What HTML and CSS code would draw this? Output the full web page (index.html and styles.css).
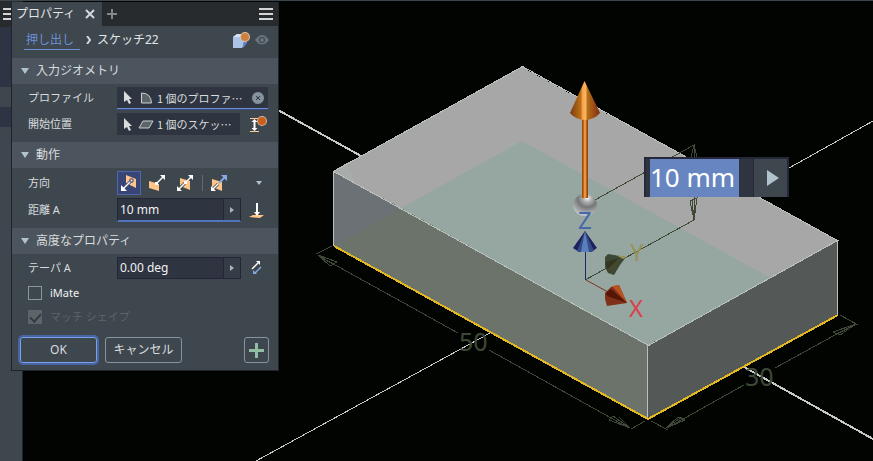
FILE: index.html
```html
<!DOCTYPE html>
<html lang="ja">
<head>
<meta charset="utf-8">
<title>プロパティ</title>
<meta name="viewport" content="width=device-width, initial-scale=1">
<link rel="stylesheet" href="styles.css">
</head>
<body>
<div class="app">
  <main class="scene">
    <svg class="model" width="873" height="461" viewBox="0 0 873 461" aria-label="モデル">
      <defs>
        <linearGradient id="shaft"><stop offset="0" stop-color="#8b3d0e"/><stop offset=".25" stop-color="#c4680f"/><stop offset=".5" stop-color="#ffad57"/><stop offset=".72" stop-color="#bd6a15"/><stop offset="1" stop-color="#84320b"/></linearGradient>
        <linearGradient id="head"><stop offset="0" stop-color="#823614"/><stop offset=".22" stop-color="#a05c16"/><stop offset=".36" stop-color="#bd7016"/><stop offset=".42" stop-color="#f8a44e"/><stop offset=".52" stop-color="#ffb35d"/><stop offset=".58" stop-color="#b07019"/><stop offset=".8" stop-color="#9c4b14"/><stop offset="1" stop-color="#7a2b12"/></linearGradient>
        <radialGradient id="ball" cx=".6" cy=".2" r=".8"><stop offset="0" stop-color="#f4f4f4"/><stop offset=".2" stop-color="#b4b4b6"/><stop offset=".5" stop-color="#747678"/><stop offset=".8" stop-color="#a5a7aa"/><stop offset="1" stop-color="#c4c7cc"/></radialGradient>
      </defs>
      <g class="crisp" stroke="#c9cac8" fill="none">
        <path stroke-width="2" d="M278 110 361 156M744 367 873 439"/>
        <path d="M256 461 490 333M789 168 873 121"/>
      </g>
      <g class="crisp">
        <path fill="#a7a7a7" d="M522 67 838 241 648 345 333 171z"/>
        <path fill="#96a7a1" d="M522 141 771 278 648 345 401 208z"/>
        <path fill="#a8adab" d="M333 171 347 163 355 183z"/>
        <path fill="#6b7175" d="M333 171 401 208 334 246z"/>
        <path fill="#6b736a" d="M401 208 648 345V419L334 246z"/>
        <path fill="#545857" d="M648 345 838 241V315L648 419z"/>
        <path fill="none" stroke="#b9c1be" d="M333.500 171.500 522.500 66.500 837.500 240.500 648.500 345.500 333.500 171.500V246M837.500 240V315M647.500 345V419"/>
        <path fill="none" stroke="#e3b820" stroke-width="2" d="M334 246 648 419 838 315"/>
      </g>
      <g class="crisp" fill="none" stroke="#3d4936">
        <path d="M332 246 316 254M319 256 458 333M489 350 629 428M631 429 645 421M318 255 337 262 330 266zM318 255 334 265M630 428 613 416 609 420zM630 428 619 417"/>
        <path d="M651 421 668 430M667 428 744 385M775 368 855 324M840 315 858 325M666 428 678 417 685 420zM666 428 682 417M856 324 833 332 840 335zM856 324 837 334"/>
        <path d="M586 205 694 145V220L585 280M694 145 697 157M694 145 691 157M694 220 690 201 697 198zM694 220 692 199"/>
      </g>
      <g class="size-text"><text x="459" y="351">50</text><text x="745" y="386">30</text></g>
      <path fill="none" stroke="#202463" d="M585.500 248V280"/>
      <path fill="none" stroke="#7d321c" d="M586 280 608 292"/>
      <path fill="#1f205d" d="M585 231 597 248 591 252H579L573 248z"/><path fill="#344d86" d="M585 231 594 251 590 252H580L577 251z"/><path fill="#5b7fbd" d="M585 231 589 252H581z"/>
      <path fill="#3c4835" d="M605 257 608 254 626 257 620 265 614 275 608 273 605 267z"/><path fill="#34351f" d="M606 262 619 258 607 270z"/><path fill="#45492c" d="M607 270 621 257 614 272z"/><path fill="#9c9659" d="M616 255 627 257 623 259z"/>
      <path fill="#80301a" d="M605 293 611 287 619 285 627 303 607 306 605 299z"/><path fill="#b85320" d="M612 286 619 285 627 303z"/><path fill="#551605" d="M606 293 611 289 627 303 607 296z"/>
      <path fill="url(#shaft)" d="M582 118h6v80h-6z"/>
      <path fill="url(#head)" d="M584.500 81 600 113Q594 120 585 120T570 113z"/>
      <ellipse cx="585" cy="205" rx="12" ry="11" fill="url(#ball)"/>
      <path fill="url(#shaft)" d="M582 192h6v6h-6z"/>
      <g class="axis-text"><text class="axis-z" x="578" y="229">Z</text><text class="axis-y" x="630" y="261">Y</text><text class="axis-x" x="629" y="317">X</text></g>
    </svg>
    <div class="hud"><input class="hud-input" aria-label="距離" value="10 mm"><button class="hud-more" aria-label="オプション"><svg width="14" height="18" viewBox="0 0 14 18"><path fill="#b0c2cb" d="M1 1 13 9 1 17z"/></svg></button></div>
  </main>
  <aside class="dock"><div class="dock-head"><svg width="8" height="12" viewBox="0 0 8 12"><path stroke="#d3d5d6" stroke-width="2" d="M0 1h8M0 6h8M0 11h8"/></svg></div><div class="dock-list"></div><div class="dock-item"></div></aside>
  <form class="panel">
    <header class="tabs">
      <div class="tab">プロパティ <button type="button" class="plain" aria-label="閉じる"><svg width="10" height="10" viewBox="0 0 10 10"><path stroke="#d5d8da" stroke-width="2" d="M1 1l8 8M9 1 1 9"/></svg></button></div>
      <button type="button" class="plain add-tab" aria-label="追加"><svg width="10" height="10" viewBox="0 0 10 10"><path stroke="#838788" stroke-width="2" d="M5 0v10M0 5h10"/></svg></button>
      <button type="button" class="plain menu" aria-label="メニュー"><svg width="14" height="12" viewBox="0 0 14 12"><path stroke="#d3d5d6" stroke-width="2" d="M0 1h14M0 6h14M0 11h14"/></svg></button>
    </header>
    <nav class="crumbs">
      <a href="#">押し出し</a>
      <svg width="6" height="8" viewBox="0 0 6 8"><path fill="none" stroke="#d5d8da" stroke-width="2" d="M1 0l3 4-3 4"/></svg>
      <span>スケッチ22</span>
      <svg class="crumb-tools" width="17" height="17" viewBox="0 0 17 17"><path fill="#abc3e8" d="M0 5 4 2h8v9l-3 5H0z"/><path fill="#d5e0f1" d="M0 5 4 2h8L9 5z"/><path fill="#6687c6" d="m10 16 4-5V9h-2l-2 2z"/><circle cx="12" cy="5" r="5" fill="#dcc2a4"/><circle cx="12" cy="5" r="4" fill="#cd8040"/></svg>
      <svg width="14" height="10" viewBox="0 0 14 10"><path fill="#67747d" d="M0 5Q7-5 14 5 7 14 0 5"/><circle cx="7" cy="5" r="3" fill="#3e464e"/><circle cx="7" cy="5" r="2" fill="#67747d"/></svg>
    </nav>
    <h2><svg width="8" height="6" viewBox="0 0 8 6"><path d="M0 0h8L4 6z"/></svg>入力ジオメトリ</h2>
    <section class="inputs">
      <div class="row"><span class="name">プロファイル</span><button type="button" class="pick wide active">
        <svg width="8" height="13" viewBox="0 0 8 13"><path fill="#d9dcdd" d="M0 0 8 8H5l2 4-2 1-2-4-3 2z"/></svg>
        <svg class="shape" width="14" height="12" viewBox="0 0 14 12"><path fill="#5a6469" stroke="#cbd0d2" d="M1.500 1Q11 1 11.500 11H1.500z"/></svg>
        <span>1 個のプロファ…</span><svg class="clear" width="12" height="12" viewBox="0 0 12 12"><circle cx="6" cy="6" r="6" fill="#84939c"/><path stroke="#2e3440" d="m4 4 4 4M8 4 4 8"/></svg></button></div>
      <div class="row"><span class="name">開始位置</span><button type="button" class="pick">
        <svg width="8" height="13" viewBox="0 0 8 13"><path fill="#d9dcdd" d="M0 0 8 8H5l2 4-2 1-2-4-3 2z"/></svg>
        <svg class="shape" width="16" height="9" viewBox="0 0 16 9"><path fill="#5a6469" stroke="#cbd0d2" d="M5 1H15L11 8H1z"/></svg>
        <span>1 個のスケッ…</span></button>
        <svg class="side" width="18" height="17" viewBox="0 0 18 17"><path stroke="#ffc88e" d="M0 2.500h9M0 15.500h9"/><path fill="#fff" d="m4.500 3 3 3h-2v6h2l-3 3-3-3h2V6h-2z"/><circle cx="12" cy="5" r="5" fill="#d5b59c"/><circle cx="12" cy="5" r="4" fill="#c8601e"/></svg></div>
    </section>
    <h2><svg width="8" height="6" viewBox="0 0 8 6"><path d="M0 0h8L4 6z"/></svg>動作</h2>
    <section class="action">
      <div class="row"><span class="name">方向</span><div class="directions">
        <button type="button" class="dir selected" aria-label="既定"><svg width="16" height="16" viewBox="0 0 16 16"><path fill="#ffc486" d="M5 0 15 4v9L5 8z"/><path stroke="#3a4577" stroke-width="3" d="M3 13 11 5"/><path stroke="#fff" stroke-width="1.500" d="M2 14 10 6"/><path fill="#fff" d="M0 10v6h6z"/><path fill="#ffe4c6" stroke="#3a4577" d="M9 4h3v3H9z"/></svg></button>
        <button type="button" class="dir" aria-label="反転"><svg width="16" height="16" viewBox="0 0 16 16"><path fill="#ffc486" d="M0 6 10 9v7L0 13z"/><path stroke="#3e464e" stroke-width="3" d="M7 9 11 5"/><path stroke="#fff" stroke-width="1.500" d="M7 9 14 2"/><path fill="#fff" d="M11 0h5v5zM6 7h3v3H6z"/></svg></button>
        <button type="button" class="dir" aria-label="対称"><svg width="16" height="16" viewBox="0 0 16 16"><path fill="#ffc486" d="M3 3 13 6v9L3 11z"/><path stroke="#3e464e" stroke-width="3" d="M3 13 9 7"/><path stroke="#fff" stroke-width="1.500" d="M2 14 14 2"/><path fill="#fff" d="M11 0h5v5zM0 11v5h5zM7 6h3v3H7z"/></svg></button>
        <i class="divider"></i>
        <button type="button" class="dir" aria-label="非対称"><svg width="16" height="16" viewBox="0 0 16 16"><path fill="#ffc486" d="M1 4 11 7v9L1 12z"/><path stroke="#3e464e" stroke-width="3" d="M2 14 7 9"/><path stroke="#86aae6" stroke-width="2" d="M8 8 14 2"/><path fill="#86aae6" d="M10 0h6v6z"/><path stroke="#fff" stroke-width="1.500" d="M2 14 7 9"/><path fill="#fff" d="M0 11v5h5z"/></svg></button>
        <button type="button" class="plain drop" aria-label="その他"><svg width="6" height="4" viewBox="0 0 6 4"><path fill="#b0c2cb" d="M0 0h6L3 4z"/></svg></button>
      </div></div>
      <div class="row"><label class="name" for="distance">距離 A</label><div class="field active"><input id="distance" value="10 mm"><button type="button" aria-label="オプション"><svg width="4" height="6" viewBox="0 0 4 6"><path fill="#a6b6bd" d="M0 0 4 3 0 6z"/></svg></button></div>
        <svg class="side" width="16" height="15" viewBox="0 0 16 15"><path fill="#ffc486" d="M0 14 4 12h11l-4 3z"/><path fill="#fff" d="M7 0h2v9h2l-3 4-3-4h2z"/></svg></div>
    </section>
    <h2><svg width="8" height="6" viewBox="0 0 8 6"><path d="M0 0h8L4 6z"/></svg>高度なプロパティ</h2>
    <section class="advanced">
      <div class="row"><label class="name" for="taper">テーパ A</label><div class="field"><input id="taper" value="0.00 deg"><button type="button" aria-label="オプション"><svg width="4" height="6" viewBox="0 0 4 6"><path fill="#a6b6bd" d="M0 0 4 3 0 6z"/></svg></button></div>
        <svg class="side" width="12" height="14" viewBox="0 0 12 14"><path stroke="#fff" stroke-width="1.500" d="M1 8 7 2"/><path fill="#fff" d="M5 0h4v4z"/><path stroke="#84a7e4" stroke-width="1.500" d="m4 12 6-6"/><path fill="#84a7e4" d="M2 9v4h4z"/></svg></div>
      <label class="check"><input type="checkbox">iMate</label>
      <label class="check off"><input type="checkbox" checked disabled>マッチ シェイプ</label>
    </section>
    <footer class="buttons"><button type="button" class="btn ok">OK</button><button type="button" class="btn cancel">キャンセル</button><button type="button" class="btn plus" aria-label="適用して新規作成"><svg width="15" height="15" viewBox="0 0 15 15"><path fill="#8fbea3" d="M6 0h3v6h6v3H9v6H6V9H0V6h6z"/></svg></button></footer>
  </form>
</div>
</body>
</html>
```
FILE: styles.css
```css
* { box-sizing: border-box; }
body { margin: 0; background: #020402; color: #d8dcde; font: 12px/16px "Noto Sans", "Noto Sans CJK JP", sans-serif; overflow: hidden; }
button, input { font: inherit; color: inherit; margin: 0; padding: 0; border: 0; background: none; }
svg { display: block; flex: none; }
.app { position: relative; min-height: 100vh; border-top: 1px solid #3e464e; display: flex; align-items: flex-start; }
.scene { position: absolute; top: -1px; left: 0; z-index: -1; }
.crisp { shape-rendering: crispEdges; }
.hud { position: absolute; left: 644px; top: 157px; width: 145px; height: 40px; display: flex; background: #2e3440; border: 2px solid #26273a; border-bottom: 0; padding-left: 4px; }
.hud-input { width: 89px; height: 38px; background: #6786c1; color: #fff; font-size: 26px; padding: 0 0 3px; outline: 0; }
.hud-more { margin-left: auto; width: 34px; height: 38px; display: grid; place-items: center; background: #3e464e; border-left: 1px solid #26273a; padding-left: 4px; }
.size-text { font-size: 25px; fill: #3d4936; }
.axis-text { font-size: 24px; }
.axis-x { fill: #db404c; }
.axis-y { fill: #989258; }
.axis-z { fill: #4767aa; }
.dock { width: 23px; min-height: calc(100vh - 1px); background: #3e464e; border-right: 1px solid #202532; }
.dock-head { height: 26px; padding: 7px 0 0 3px; background: #282b2e; }
.dock-list { height: 60px; background: #2e3443; }
.dock-item { height: 20px; margin-top: 20px; background: #2e3443; }
.panel { width: 268px; margin: 1px 0 0 -12px; background: #3e464e; border: 1px solid #20222c; border-top: 0; position: relative; padding-bottom: 7px; }
.plain { display: grid; place-items: center; }
.tabs { height: 24px; background: #282b2e; display: flex; align-items: center; padding-right: 5px; }
.tab { height: 24px; width: 90px; padding: 0 7px 0 4px; display: flex; align-items: center; justify-content: space-between; background: #3e464e; color: #e3e6e8; }
.add-tab { margin-left: 5px; }
.menu { margin-left: auto; }
.crumbs { height: 32px; display: flex; align-items: center; padding: 0 9px 4px 12px; color: #e3e6e8; }
.crumbs a { width: 56px; height: 20px; line-height: 20px; padding-left: 2px; margin-right: 6px; color: #6c90d6; text-decoration: none; border-bottom: 1px solid #6c90d6; }
.crumbs span { margin-left: 5px; }
.crumb-tools { margin: 0 5px 0 auto; }
h2 { height: 26px; margin: 0; padding: 0 0 0 9px; display: flex; align-items: center; gap: 7px; background: #4c555d; font-size: 12px; font-weight: 400; }
h2 svg { fill: #b0c2cb; }
section { padding: 3px 10px 0 16px; font-size: 11px; }
.inputs { height: 58px; }
.action { height: 60px; }
.advanced { height: 83px; }
.row { display: flex; align-items: center; height: 22px; margin-bottom: 4px; }
.action .row { height: 24px; margin-bottom: 3px; }
.advanced .row { margin-bottom: 2px; }
.name { width: 89px; flex: none; }
.pick { width: 124px; height: 22px; display: flex; align-items: center; padding: 0 7px; background: #2e3440; font-family: "Noto Sans CJK JP", sans-serif; white-space: nowrap; }
.pick.wide { width: 151px; padding-right: 4px; }
.pick.active { border-bottom: 1px solid #6c90d6; box-shadow: 0 1px #3a4880; }
.shape { margin: 0 3px 0 8px; }
.pick:not(.wide) .shape { margin: 0 3px 0 6px; }
.clear { margin-left: auto; }
.side { margin-left: 10px; }
.action .side { margin-left: 8px; }
.directions { flex: 1; display: flex; align-items: center; }
.dir { width: 24px; height: 24px; display: grid; place-items: center; border: 1px solid transparent; margin-right: 4px; }
.dir.selected { background: #3a4577; border-color: #4e68ac; }
.divider { width: 1px; height: 16px; background: #646a70; margin: 0 4px 0 1px; }
.drop { margin: 0 6px 0 auto; }
.field { width: 124px; height: 22px; display: flex; background: #2e3440; border: 1px solid #232538; font-size: 12px; color: #f0f2f3; }
.field.active { height: 24px; border-bottom: 2px solid #5272bb; }
.field input { flex: 1; min-width: 0; padding-left: 2px; outline: 0; }
.field button { width: 17px; display: grid; place-items: center; background: #363d47; border-left: 1px solid #232538; }
.check { height: 24px; display: flex; align-items: center; gap: 8px; color: #f0f2f3; }
.check input { appearance: none; width: 14px; height: 14px; border: 1px solid #8b969c; display: grid; place-items: center; }
.check.off { color: #5c6568; }
.check.off input { background: #5c6568; border: 0; }
.check.off input::after { content: ""; width: 5px; height: 9px; margin-bottom: 2px; border: solid #343b42; border-width: 0 2px 2px 0; transform: rotate(42deg); }
.buttons { display: flex; align-items: center; padding: 0 9px 0 8px; }
.btn { height: 26px; border: 1px solid #87949d; border-radius: 3px; display: grid; place-items: center; }
.ok { width: 77px; border-color: #78a2ed; box-shadow: 0 0 0 2px #4864a3; }
.cancel { width: 77px; margin-left: 8px; }
.plus { width: 25px; margin-left: auto; }
```
